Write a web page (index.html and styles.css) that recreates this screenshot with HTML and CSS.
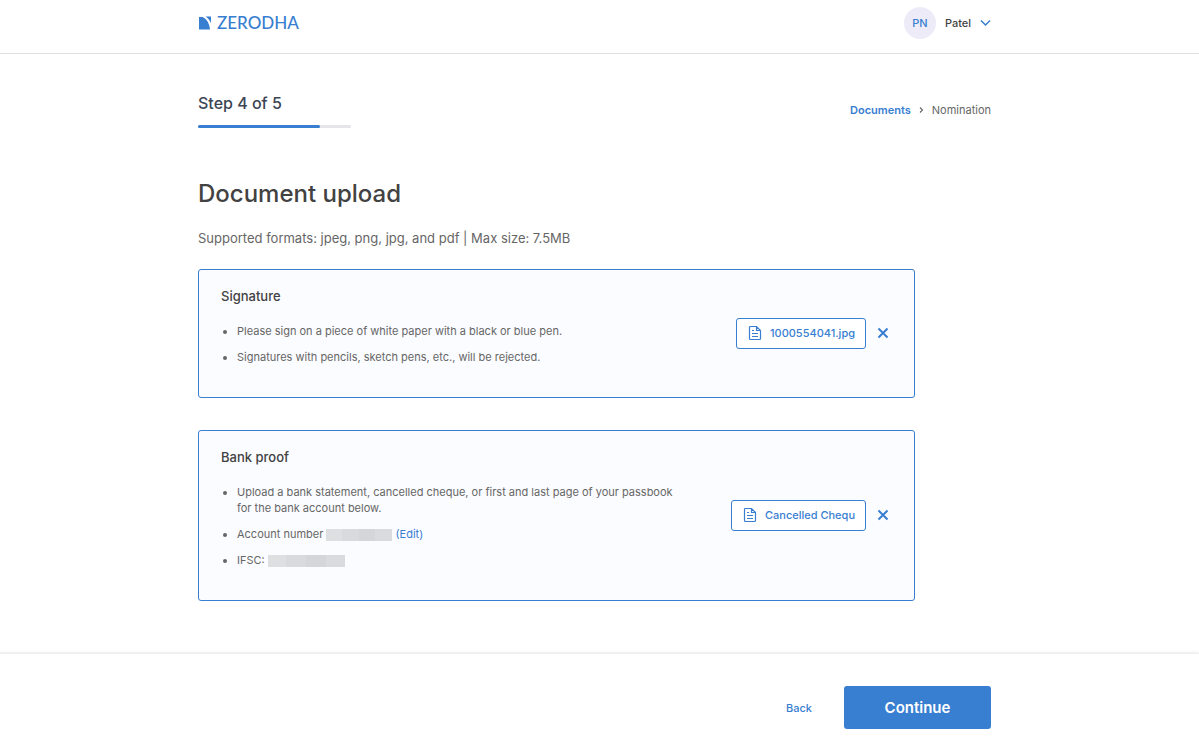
FILE: index.html
```html
<!DOCTYPE html>
<html lang="en">
<head>
<meta charset="utf-8">
<meta name="viewport" content="width=device-width, initial-scale=1">
<title>Document upload</title>
<link rel="stylesheet" href="styles.css">
</head>
<body>
<svg class="sprite" aria-hidden="true">
  <symbol id="doc" viewBox="0 0 14 16">
    <path d="M2.500 1.500h6l4 4v8a1 1 0 0 1-1 1h-9a1 1 0 0 1-1-1v-11a1 1 0 0 1 1-1zM8.500 1.500v4h4M4 5.500h2M4 8.500h6M4 11.500h6" fill="none" stroke="currentColor" stroke-width="1.200"/>
  </symbol>
  <symbol id="cross" viewBox="0 0 12 12">
    <path d="M1.500 1.500l9 9M10.500 1.500l-9 9" fill="none" stroke="currentColor" stroke-width="2"/>
  </symbol>
</svg>
<header class="header">
  <div class="container header-row">
    <a class="logo" href="#">
      <svg class="logo-mark" viewBox="0 0 13 14" aria-hidden="true">
        <path d="M1 1h3.500c4 1.500 7 6.500 7.500 12.500H1zM7.500 .5H13V7C11.500 4 10 2 7.500 .5z" fill="currentColor"/>
      </svg>
      <span>ZERODHA</span>
    </a>
    <button class="user" type="button">
      <span class="avatar">PN</span>
      <span>Patel</span>
      <svg class="chevron" viewBox="0 0 11 8" aria-hidden="true"><path d="M1 1.500L5.500 6 10 1.500" fill="none" stroke="currentColor" stroke-width="1.500"/></svg>
    </button>
  </div>
</header>
<main class="main">
  <div class="top">
    <div class="step">
      <p class="step-label">Step 4 of 5</p>
      <div class="track"><div class="fill"></div></div>
    </div>
    <nav class="crumbs">
      <a href="#">Documents</a>
      <svg class="crumb-arrow" viewBox="0 0 5 8" aria-hidden="true"><path d="M1 1.500L3.500 4 1 6.500" fill="none" stroke="currentColor" stroke-width="1.100"/></svg>
      <span>Nomination</span>
    </nav>
  </div>
  <h1 class="title">Document upload</h1>
  <p class="formats">Supported formats: jpeg, png, jpg, and pdf | Max size: 7.5MB</p>
  <div class="cards">
    <section class="card">
      <div class="info">
        <h2 class="card-title">Signature</h2>
        <ul class="list">
          <li>Please sign on a piece of white paper with a black or blue pen.</li>
          <li>Signatures with pencils, sketch pens, etc., will be rejected.</li>
        </ul>
      </div>
      <button class="file" type="button"><svg class="doc" aria-hidden="true"><use href="#doc"/></svg><span>1000554041.jpg</span></button>
      <button class="remove" type="button" aria-label="Remove signature"><svg class="cross" aria-hidden="true"><use href="#cross"/></svg></button>
    </section>
    <section class="card">
      <div class="info">
        <h2 class="card-title">Bank proof</h2>
        <ul class="list">
          <li>Upload a bank statement, cancelled cheque, or first and last page of your passbook for the bank account below.</li>
          <li>Account number <span class="mask mask-account"></span> <a href="#">(Edit)</a></li>
          <li>IFSC: <span class="mask mask-ifsc"></span></li>
        </ul>
      </div>
      <button class="file" type="button"><svg class="doc" aria-hidden="true"><use href="#doc"/></svg><span>Cancelled Chequ</span></button>
      <button class="remove" type="button" aria-label="Remove bank proof"><svg class="cross" aria-hidden="true"><use href="#cross"/></svg></button>
    </section>
  </div>
</main>
<footer class="footer">
  <div class="container footer-row">
    <a class="back" href="#">Back</a>
    <button class="continue" type="button">Continue</button>
  </div>
</footer>
</body>
</html>
```
FILE: styles.css
```css
* { box-sizing: border-box; }
body {
  margin: 0;
  min-height: 100vh;
  display: flex;
  flex-direction: column;
  background: #fff;
  color: #666;
  font: 11px/16px Inter, "Liberation Sans", sans-serif;
}
button { font: inherit; border: 0; background: none; padding: 0; cursor: pointer; }
a { color: #387ed1; text-decoration: none; }
h1, h2, p, ul { margin: 0; }
.sprite { display: none; }
.header, .footer { padding-right: 10px; }
.container { width: 100%; max-width: 793px; margin: 0 auto; }
.header { border-bottom: 1px solid #e0e0e0; }
.header-row { display: flex; align-items: center; justify-content: space-between; padding: 7px 0 14px; }
.logo { display: flex; align-items: center; gap: 6px; font: 500 17px/20px Lato, sans-serif; }
.logo-mark { width: 13px; height: 14px; }
.user { display: flex; align-items: center; gap: 9px; color: #424242; font-weight: 500; }
.avatar { width: 32px; height: 32px; border-radius: 50%; background: #ecebf7; color: #387ed1; line-height: 32px; }
.chevron { width: 11px; height: 8px; color: #387ed1; }
.main { flex: 1; padding: 0 max(16px, calc((100% - 783px) / 2)) 0 max(16px, calc((100% - 803px) / 2)); }
.top { display: flex; justify-content: space-between; padding-top: 39px; }
.step { width: 153px; }
.step-label { font-size: 16px; line-height: 20px; font-weight: 500; color: #3c4554; }
.track { height: 3px; margin-top: 12px; border-radius: 2px; background: #e5e5ea; }
.fill { width: 80%; height: 3px; border-radius: 2px; background: #387ed1; }
.crumbs { display: flex; align-items: center; align-self: flex-start; gap: 8px; margin-top: 9px; }
.crumbs a { font-weight: 600; }
.crumb-arrow { width: 5px; height: 8px; }
.title { margin-top: 50px; font-size: 24px; line-height: 32px; font-weight: 500; color: #424242; }
.formats { margin-top: 18px; font-size: 13px; line-height: 20px; }
.cards { max-width: 717px; margin: 21px 0 32px; display: grid; gap: 32px; }
.card { display: flex; align-items: center; border: 1px solid #387ed1; border-radius: 3px; background: #fbfcff; padding-right: 25px; }
.info { flex: 1; padding: 16px 22px 32px; }
.card-title { font-size: 13px; line-height: 20px; font-weight: 500; color: #424242; }
.list { max-width: 464px; margin-top: 17px; padding-left: 16px; display: grid; gap: 10px; }
.mask { display: inline-block; height: 12px; vertical-align: -3px; background: linear-gradient(90deg, #dedfe1 0 24%, #d9dadd 24% 50%, #d4d6d9 50% 75%, #dadbde 75%); }
.mask-account { width: 66px; }
.mask-ifsc { width: 77px; }
.file { display: flex; align-items: center; gap: 8px; height: 31px; padding: 0 10px 1px 11px; border: 1px solid #387ed1; border-radius: 3px; background: #fff; color: #387ed1; font-weight: 500; }
.doc { width: 14px; height: 16px; }
.remove { margin-left: 11px; padding-bottom: 1px; color: #387ed1; }
.cross { display: block; width: 12px; height: 12px; }
.footer { border-top: 1px solid #eee; box-shadow: 0 -1px 2px #eee; }
.footer-row { display: flex; align-items: center; justify-content: flex-end; gap: 32px; padding: 32px 0 19px; }
.back { font-weight: 500; }
.continue { width: 147px; height: 43px; border-radius: 3px; background: #387ed1; color: #fff; font-size: 15px; font-weight: 600; }
```
